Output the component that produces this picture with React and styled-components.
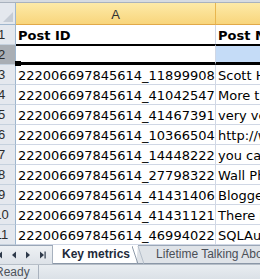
import React from 'react'
import styled, { createGlobalStyle } from 'styled-components'

const GlobalStyle = createGlobalStyle`
  html, body {
    margin: 0;
    padding: 0;
    background: #fff;
  }
`

const Frame = styled.div`
  width: 260px;
  height: 279px;
  overflow: hidden;
  display: flex;
  flex-direction: column;
  font-family: 'DejaVu Sans', Verdana, sans-serif;
`

const TopStrip = styled.div`
  height: 3px;
  flex: none;
  background: #d6dbe2;
  border-bottom: 1px solid #a9b2be;
  box-sizing: border-box;
`

const Sheet = styled.div`
  flex: none;
  display: grid;
  grid-template-columns: 16px 200px 240px;
  grid-template-rows: 22px repeat(11, 20px);
`

const Corner = styled.div`
  background: #e4e8ee;
  border-right: 1px solid #9eb6ce;
  border-bottom: 1px solid #9eb6ce;
  box-sizing: border-box;
  position: relative;

  &::after {
    content: '';
    position: absolute;
    right: 2px;
    bottom: 2px;
    border-style: solid;
    border-width: 0 0 10px 10px;
    border-color: transparent transparent #c5ccd5 transparent;
  }
`

const ColHead = styled.div`
  background: linear-gradient(#fdeaa8, #f8d57c);
  border-right: 1px solid #e8b64f;
  border-bottom: 1px solid #e1a94a;
  box-sizing: border-box;
  display: flex;
  align-items: center;
  justify-content: center;
  font-family: 'Liberation Sans', Arial, sans-serif;
  font-size: 13px;
  color: #303030;
  padding-top: 2px;
`

const RowHead = styled.div`
  background: ${p => (p.$active ? '#a9aeb4' : '#e4e8ee')};
  border-right: 1px solid #9eb6ce;
  border-bottom: 1px solid #c5d1de;
  box-sizing: border-box;
  overflow: hidden;
  font-family: 'Liberation Sans', Arial, sans-serif;
  font-size: 13px;
  color: #2c2c2c;
  display: flex;
  align-items: center;

  span {
    flex: none;
    width: 25px;
    margin-left: -11px;
    text-align: center;
  }
`

const Cell = styled.div`
  border-right: 1px solid #d0d7e5;
  border-bottom: 1px solid #d0d7e5;
  box-sizing: border-box;
  overflow: hidden;
  white-space: nowrap;
  font-size: 13px;
  font-weight: ${p => (p.$bold ? 'bold' : 'normal')};
  color: #000;
  background: ${p => (p.$picked ? '#c5dcf7' : '#fff')};
  padding: 0 0 1px 2px;
  display: flex;
  align-items: flex-end;
`

const SelCell = styled(Cell)`
  border-top: 2px solid #000;
  border-bottom: 3px solid #000;
  margin-top: -1px;
  height: 21px;
  position: relative;
  overflow: visible;
`

const FillHandle = styled.div`
  position: absolute;
  left: -1px;
  bottom: -4px;
  width: 6px;
  height: 5px;
  background: #000;
`

const TabBar = styled.div`
  flex: none;
  height: 19px;
  display: flex;
  align-items: stretch;
  background: #dfe3e8;
  border-top: 1px solid #9ba7b7;
  box-sizing: border-box;
  font-family: 'Liberation Sans', Arial, sans-serif;
  font-size: 12px;
`

const Nav = styled.div`
  width: 59px;
  margin-left: -7px;
  flex: none;
  display: flex;
  align-items: center;
  border-right: 1px solid #a7b1be;
  background: linear-gradient(#eef1f4, #dde2e8);
`

const NavBtn = styled.div`
  width: 14px;
  display: flex;
  align-items: center;
  justify-content: center;
  color: #333;
`

const Tab = styled.div`
  display: flex;
  align-items: center;
  padding: 0 ${p => (p.$active ? '8px' : '6px')} 0 ${p => (p.$active ? '9px' : '26px')};
  margin-top: -1px;
  background: ${p => (p.$active ? '#fff' : 'transparent')};
  font-weight: ${p => (p.$active ? 'bold' : 'normal')};
  color: ${p => (p.$active ? '#1e2a3a' : '#4a4f57')};
  white-space: nowrap;
  border-bottom: 1px solid #8b97a7;
  clip-path: ${p => (p.$active ? 'polygon(0 0, 100% 0, calc(100% - 2px) 100%, 0 100%)' : 'none')};
`

const Slant = styled.svg`
  flex: none;
  width: 12px;
  margin-left: -6px;
  margin-right: -14px;
  z-index: 1;
`

const StatusBar = styled.div`
  flex: 1;
  display: flex;
  align-items: center;
  background: linear-gradient(#e9edf1, #dbe1e7);
  border-top: 1px solid #b6bec8;
  font-family: 'Liberation Sans', Arial, sans-serif;
  font-size: 12px;
  color: #4d535b;
`

const StatusText = styled.div`
  margin-left: -5px;
  width: 43px;
  border-right: 1px solid #a9b2be;
  height: 100%;
  display: flex;
  align-items: center;
`

const rows = [
  ['222006697845614_118999088001', 'Scott Hanselman shared a link'],
  ['222006697845614_410425472009', 'More than one way to do it'],
  ['222006697845614_414673915066', 'very very cool stuff here'],
  ['222006697845614_103665046227', 'http://www.example.com/post'],
  ['222006697845614_144482225081', 'you can now download it'],
  ['222006697845614_277983228804', 'Wall Photos from the event'],
  ['222006697845614_414314068512', 'Bloggers are welcome'],
  ['222006697845614_414311211987', 'There is a new release'],
  ['222006697845614_469940226351', 'SQLAuthority News update'],
]

const Arrow = ({ dir, bar }) => (
  <svg width='8' height='8' viewBox='0 0 8 8'>
    {dir === 'left' ? <path d='M6 0.5 L2 4 L6 7.5 Z' fill='#2e3a4a' /> : <path d='M2 0.5 L6 4 L2 7.5 Z' fill='#2e3a4a' />}
    {bar && <rect x={dir === 'left' ? 0.5 : 6.5} y='0.5' width='1.2' height='7' fill='#2e3a4a' />}
  </svg>
)

const App = () => {
  return (
    <Frame>
      <GlobalStyle />
      <TopStrip />
      <Sheet>
        <Corner />
        <ColHead>A</ColHead>
        <ColHead />

        <RowHead><span>1</span></RowHead>
        <Cell $bold>Post ID</Cell>
        <Cell $bold>Post Message</Cell>

        <RowHead $active><span>2</span></RowHead>
        <SelCell>
          <FillHandle />
        </SelCell>
        <SelCell $picked />

        {rows.map(([id, msg], i) => (
          <React.Fragment key={id}>
            <RowHead><span>{i + 3}</span></RowHead>
            <Cell>{id}</Cell>
            <Cell>{msg}</Cell>
          </React.Fragment>
        ))}
      </Sheet>
      <TabBar>
        <Nav>
          <NavBtn><Arrow dir='left' bar /></NavBtn>
          <NavBtn><Arrow dir='left' /></NavBtn>
          <NavBtn><Arrow dir='right' /></NavBtn>
          <NavBtn><Arrow dir='right' bar /></NavBtn>
        </Nav>
        <Tab $active>Key metrics</Tab>
        <Slant viewBox='0 0 12 19' preserveAspectRatio='none'>
          <path d='M0 0 L6 19' stroke='#8b97a7' strokeWidth='1' fill='none' />
          <path d='M6 0 L12 19' stroke='#b4bdc8' strokeWidth='1' fill='none' />
        </Slant>
        <Tab>Lifetime Talking About This</Tab>
      </TabBar>
      <StatusBar>
        <StatusText>Ready</StatusText>
      </StatusBar>
    </Frame>
  )
}

export default App
